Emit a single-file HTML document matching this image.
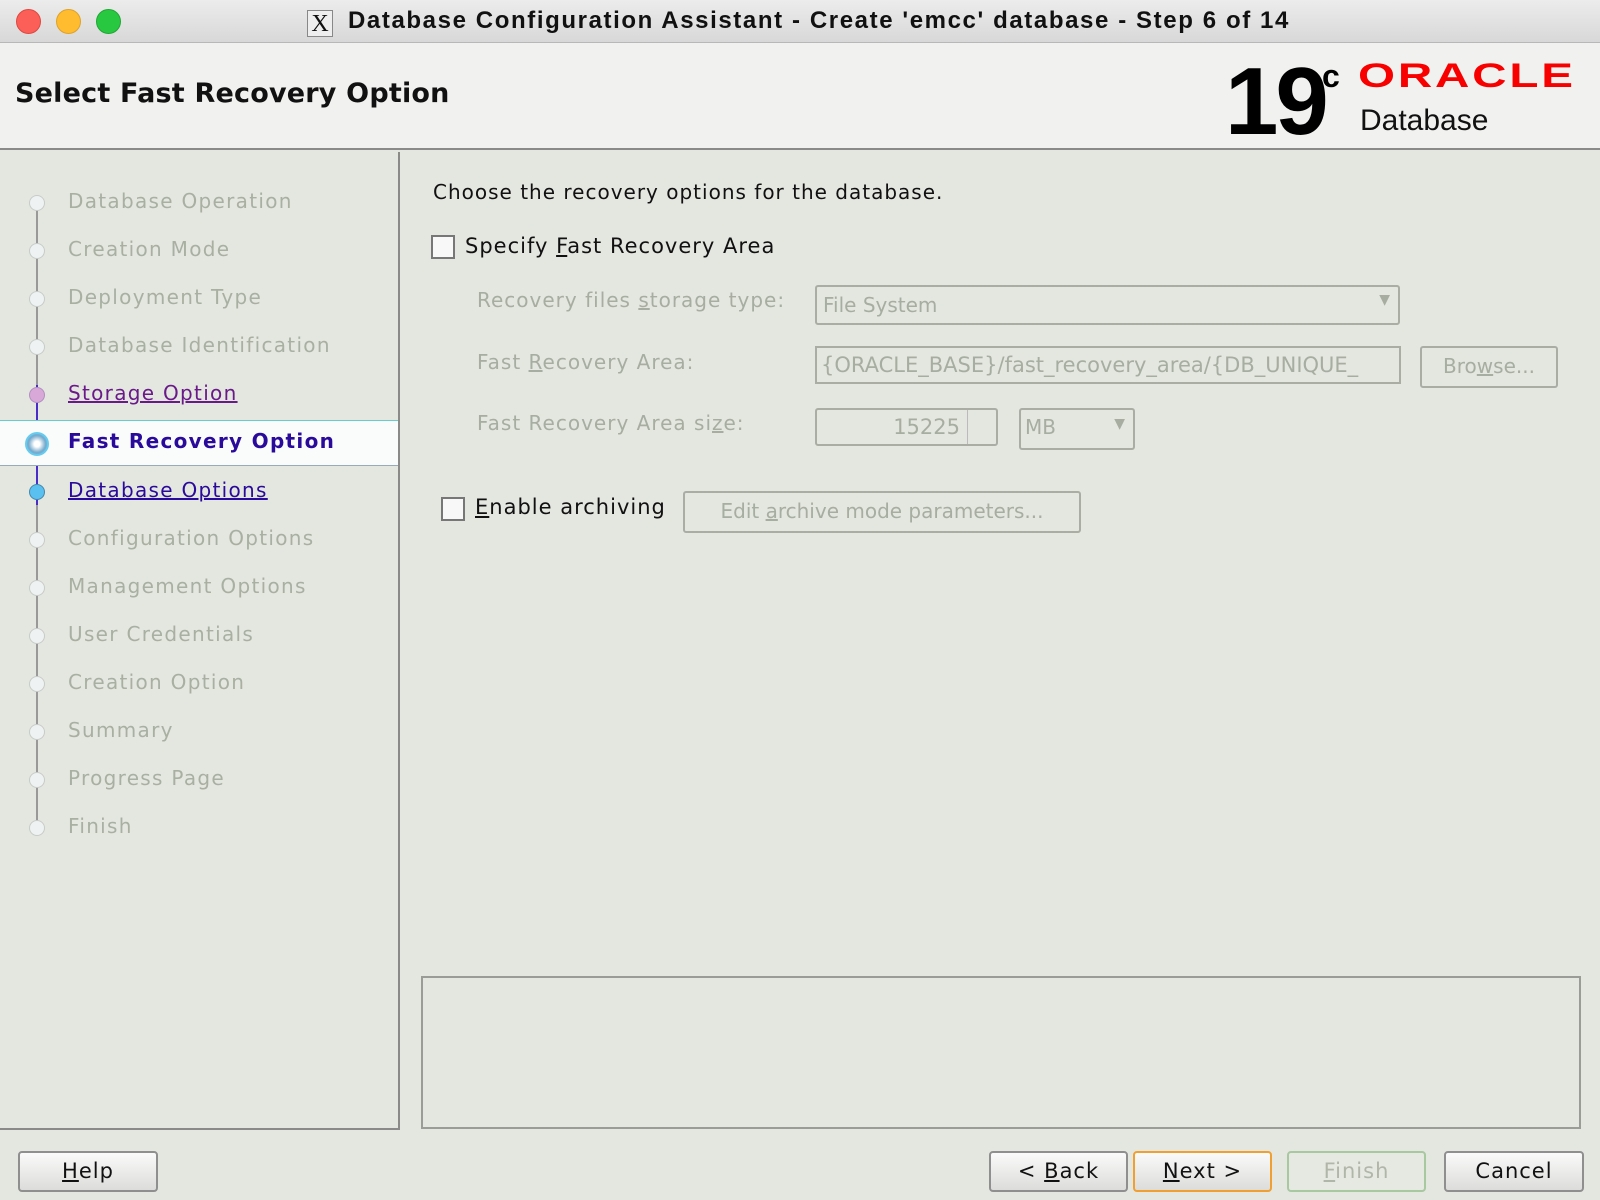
<!DOCTYPE html>
<html><head><style>
*{margin:0;padding:0;box-sizing:border-box}
body{width:1600px;height:1200px;overflow:hidden;background:#e4e6e0;font-family:"DejaVu Sans","Liberation Sans",sans-serif;position:relative;color:#111}
.abs{position:absolute}
#tb{left:0;top:0;width:1600px;height:43px;background:linear-gradient(#ececec,#d8d8d8);border-bottom:1px solid #b8b8b8}
.dot{top:9px;width:25px;height:25px;border-radius:50%}
#hdr{left:0;top:43px;width:1600px;height:107px;background:#f1f1ef;border-bottom:2px solid #8a8a88}
.nav{left:68px;font-size:20px;letter-spacing:1.3px;color:#a9b0a2;white-space:nowrap}
.nd{left:29px;width:16px;height:16px;border-radius:50%;background:#eef2f2;border:1px solid #c8ccc8}
.g{color:#a7ada0;font-size:20px;letter-spacing:1px;white-space:nowrap}
.box{border:2px solid #a9ada3;border-radius:3px}
.btn{top:1151px;height:41px;border:2px solid #8f8f8f;border-radius:4px;background:linear-gradient(#fafafa,#dcdcda);font-size:21px;text-align:center;line-height:37px;letter-spacing:1px}
.cb{width:24px;height:24px;border:2px solid #777;background:#f8f8f8}
</style></head><body>
<div id="tb" class="abs"></div>
<div class="abs dot" style="left:16px;background:#fc5f57;border:1px solid #df4840"></div>
<div class="abs dot" style="left:56px;background:#febc2e;border:1px solid #dea22a"></div>
<div class="abs dot" style="left:96px;background:#28c840;border:1px solid #1fa834"></div>
<div class="abs" style="left:307px;top:10px;width:26px;height:27px;border:1px solid #888;background:#eee;font:24px 'Liberation Serif',serif;text-align:center;line-height:26px">X</div>
<div class="abs" style="left:348px;top:7px;font:bold 24px 'Liberation Sans',sans-serif;color:#111;letter-spacing:1.6px">Database Configuration Assistant - Create 'emcc' database - Step 6 of 14</div>
<div id="hdr" class="abs"></div>
<div class="abs" style="left:15px;top:78px;font-size:27px;font-weight:bold;letter-spacing:0.2px">Select Fast Recovery Option</div>
<div class="abs" style="left:1225px;top:52px;font:bold 96px/100px 'Liberation Sans',sans-serif;letter-spacing:-3px;color:#000">19</div>
<div class="abs" style="left:1322px;top:58px;font:bold 32px 'Liberation Sans',sans-serif;color:#000">c</div>
<div class="abs" style="left:1358px;top:57px;font:bold 34px 'Liberation Sans',sans-serif;color:#f80000;letter-spacing:2px;transform:scaleX(1.4);transform-origin:left">ORACLE</div>
<div class="abs" style="left:1360px;top:104px;font:30px 'Liberation Sans',sans-serif;color:#111">Database</div>
<!-- left panel -->
<div class="abs" style="left:0;top:152px;width:400px;height:978px;border-right:2px solid #8a8a88;border-bottom:2px solid #8a8a88"></div>
<div class="abs" style="left:36px;top:205px;width:2px;height:630px;background:#999"></div>
<div class="abs" style="left:36px;top:385px;width:2px;height:120px;background:#4a2cc8"></div>
<div class="abs" style="left:0;top:420px;width:398px;height:46px;background:#fafcfc;border-top:1px solid #6cc;border-bottom:1px solid #9ab"></div>
<div class="abs nd" style="top:195px"></div><div class="abs nav" style="top:189px">Database Operation</div>
<div class="abs nd" style="top:243px"></div><div class="abs nav" style="top:237px">Creation Mode</div>
<div class="abs nd" style="top:291px"></div><div class="abs nav" style="top:285px">Deployment Type</div>
<div class="abs nd" style="top:339px"></div><div class="abs nav" style="top:333px">Database Identification</div>
<div class="abs nd" style="top:387px;background:#d8a8d8;border-color:#b090c0"></div><div class="abs nav" style="top:381px;color:#6a1a88;text-decoration:underline">Storage Option</div>
<div class="abs nd" style="top:432px;left:25px;width:24px;height:24px;background:radial-gradient(#fff 20%,#7ac 60%,#5cf);border:2px solid #6ce"></div><div class="abs nav" style="top:429px;color:#2a0a9a;font-weight:bold">Fast Recovery Option</div>
<div class="abs nd" style="top:484px;background:#5ac0f0;border-color:#48a"></div><div class="abs nav" style="top:478px;color:#2a0a9a;text-decoration:underline">Database Options</div>
<div class="abs nd" style="top:532px"></div><div class="abs nav" style="top:526px">Configuration Options</div>
<div class="abs nd" style="top:580px"></div><div class="abs nav" style="top:574px">Management Options</div>
<div class="abs nd" style="top:628px"></div><div class="abs nav" style="top:622px">User Credentials</div>
<div class="abs nd" style="top:676px"></div><div class="abs nav" style="top:670px">Creation Option</div>
<div class="abs nd" style="top:724px"></div><div class="abs nav" style="top:718px">Summary</div>
<div class="abs nd" style="top:772px"></div><div class="abs nav" style="top:766px">Progress Page</div>
<div class="abs nd" style="top:820px"></div><div class="abs nav" style="top:814px">Finish</div>
<!-- right -->
<div class="abs" style="left:433px;top:180px;font-size:20px;letter-spacing:1px">Choose the recovery options for the database.</div>
<div class="abs cb" style="left:431px;top:235px"></div>
<div class="abs" style="left:465px;top:234px;font-size:21px;letter-spacing:1px">Specify <u>F</u>ast Recovery Area</div>
<div class="abs g" style="left:477px;top:288px">Recovery files <u>s</u>torage type:</div>
<div class="abs box" style="left:815px;top:285px;width:585px;height:40px;padding:6px 6px;font-size:20px;color:#a7ada0">File System<span style="position:absolute;right:8px;top:5px;font-size:14px">▼</span></div>
<div class="abs g" style="left:477px;top:350px">Fast <u>R</u>ecovery Area:</div>
<div class="abs box" style="left:815px;top:346px;width:586px;height:38px;padding:5px 4px;font-size:21px;color:#a7ada0;overflow:hidden;white-space:nowrap;border-radius:0">{ORACLE_BASE}/fast_recovery_area/{DB_UNIQUE_</div>
<div class="abs box" style="left:1420px;top:346px;width:138px;height:42px;padding:6px;font-size:20px;color:#a7ada0;text-align:center">Bro<u>w</u>se...</div>
<div class="abs g" style="left:477px;top:411px">Fast Recovery Area si<u>z</u>e:</div>
<div class="abs box" style="left:815px;top:408px;width:183px;height:38px;padding:5px 36px 0 0;text-align:right;font-size:21px;color:#a7ada0">15225</div>
<div class="abs" style="left:967px;top:410px;width:1px;height:34px;background:#bbb"></div>
<div class="abs box" style="left:1019px;top:408px;width:116px;height:42px;padding:5px 4px;font-size:20px;color:#a7ada0">MB<span style="position:absolute;right:8px;top:6px;font-size:14px">▼</span></div>
<div class="abs cb" style="left:441px;top:497px"></div>
<div class="abs" style="left:475px;top:495px;font-size:21px;letter-spacing:1px"><u>E</u>nable archiving</div>
<div class="abs box" style="left:683px;top:491px;width:398px;height:42px;padding:6px;font-size:20px;color:#a7ada0;text-align:center">Edit <u>a</u>rchive mode parameters...</div>
<div class="abs" style="left:421px;top:976px;width:1160px;height:153px;border:2px solid #9a9c98"></div>
<!-- buttons -->
<div class="abs btn" style="left:18px;width:140px"><u>H</u>elp</div>
<div class="abs btn" style="left:989px;width:139px">&lt; <u>B</u>ack</div>
<div class="abs btn" style="left:1133px;width:139px;border-color:#f0a030"><u>N</u>ext &gt;</div>
<div class="abs btn" style="left:1287px;width:139px;border-color:#a8c8a0;color:#b0b6a8;background:#e6e8e2"><u>F</u>inish</div>
<div class="abs btn" style="left:1444px;width:140px">Cancel</div>
</body></html>
